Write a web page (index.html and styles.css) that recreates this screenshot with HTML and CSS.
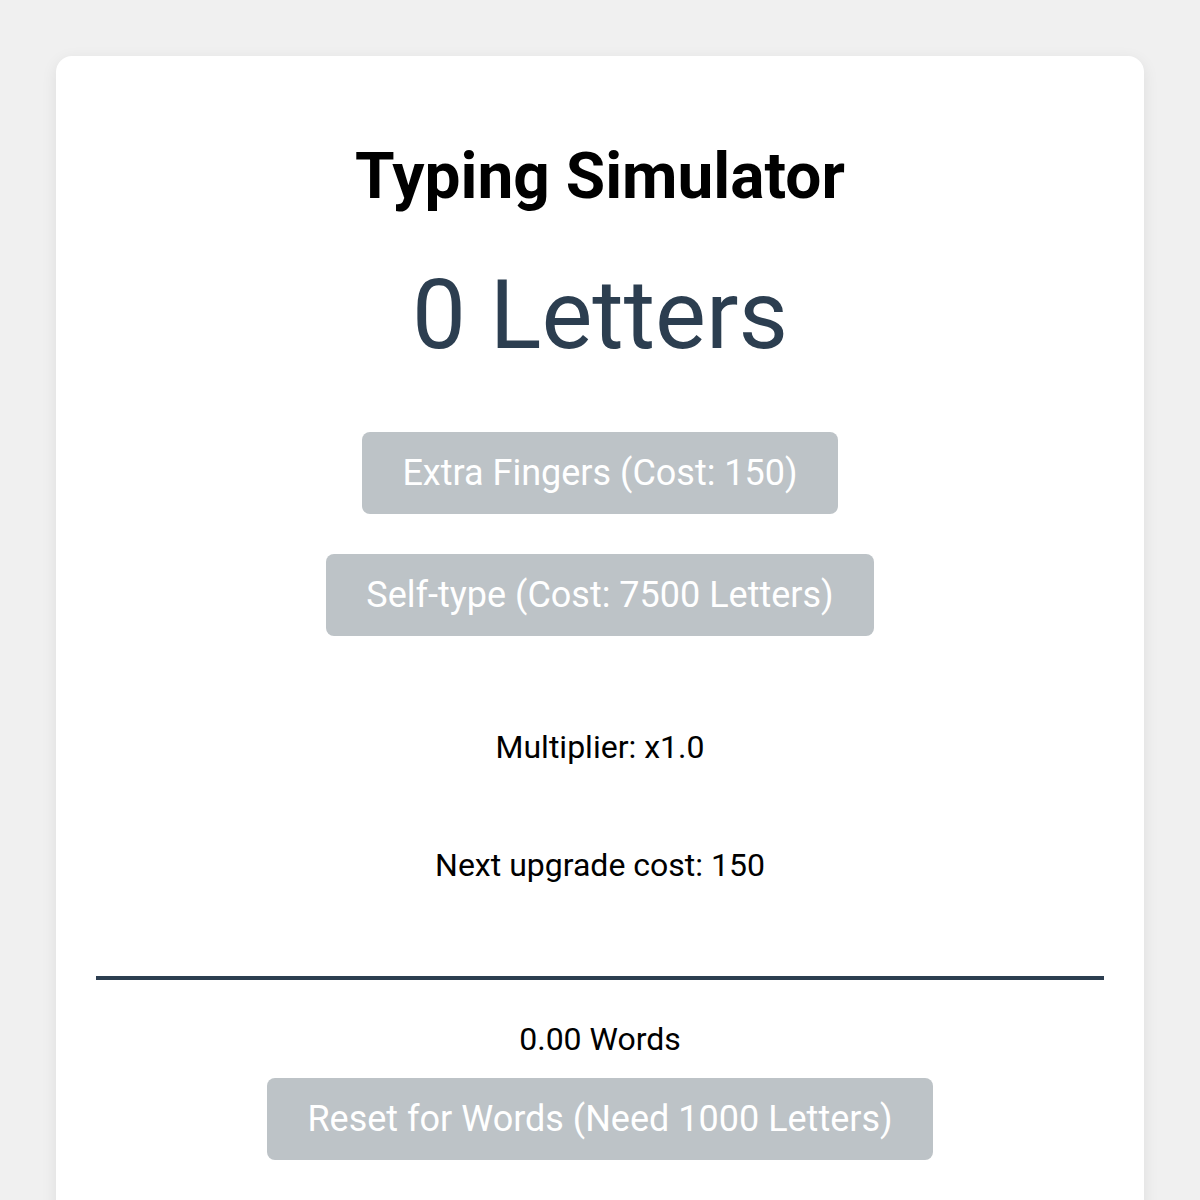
FILE: index.html
```html
<!DOCTYPE html>
<html lang="en">
<head>
<meta charset="utf-8">
<title>Typing Simulator</title>
<link rel="stylesheet" href="styles.css">
</head>
<body>
<main class="card">
  <h1 class="title">Typing Simulator</h1>
  <div class="letters">0 Letters</div>
  <button class="btn btn-first" disabled>Extra Fingers (Cost: 150)</button>
  <button class="btn btn-second" disabled>Self-type (Cost: 7500 Letters)</button>
  <p class="info info-mult">Multiplier: x1.0</p>
  <p class="info info-next">Next upgrade cost: 150</p>
  <hr class="divider">
  <p class="info words">0.00 Words</p>
  <button class="btn btn-reset" disabled>Reset for Words (Need 1000 Letters)</button>
</main>
</body>
</html>
```
FILE: styles.css
```css
html, body {
  margin: 0;
  padding: 0;
}
body {
  background: #f0f0f0;
  font-family: Roboto, "Noto Sans", sans-serif;
  color: #000;
  padding: 56px 56px 0;
}
.card {
  background: #fff;
  border-radius: 16px;
  box-shadow: 0 4px 16px rgba(0, 0, 0, 0.08);
  padding: 40px 40px 80px;
  display: flex;
  flex-direction: column;
  align-items: center;
  text-align: center;
}
.title {
  font-size: 64px;
  font-weight: 700;
  margin: 43px 0 0;
  line-height: normal;
}
.letters {
  font-size: 96px;
  color: #2c3e50;
  margin-top: 45px;
  line-height: normal;
}
.btn {
  font-family: Roboto, "Noto Sans", sans-serif;
  font-size: 36px;
  color: #fff;
  background: #bdc3c7;
  border: none;
  border-radius: 8px;
  padding: 20px 40px;
  line-height: normal;
}
.btn-first {
  margin-top: 61px;
}
.btn-second {
  margin-top: 40px;
}
.info {
  font-size: 32px;
  margin: 0;
  line-height: normal;
}
.info-mult {
  margin-top: 92px;
}
.info-next {
  margin-top: 80px;
}
.divider {
  align-self: stretch;
  border: none;
  height: 4px;
  background: #2c3e50;
  margin: 92px 0 0;
}
.words {
  margin-top: 40px;
}
.btn-reset {
  margin-top: 20px;
}
```
